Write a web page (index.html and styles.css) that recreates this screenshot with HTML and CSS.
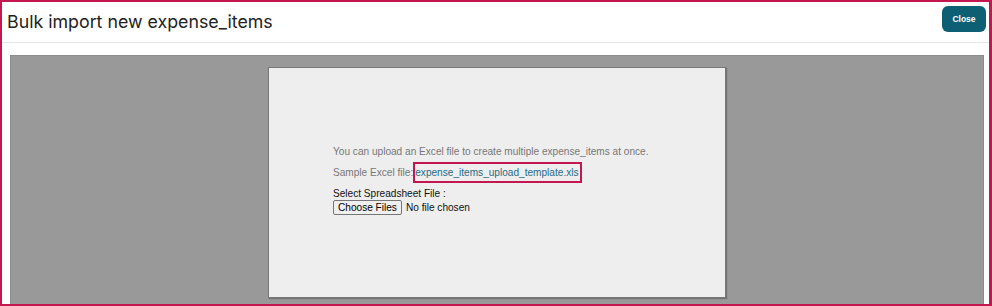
FILE: index.html
```
<!DOCTYPE html>
<html lang="en">
<head>
    <meta charset="UTF-8">
    <title>Bulk import new expense_items</title>
    <link rel="stylesheet" href="styles.css">
</head>
<body>
    <div class="modal">
        <div class="modal-header">
            <h1 class="modal-title">Bulk import new expense_items</h1>
            <button class="close-btn">Close</button>
        </div>
        <div class="modal-body">
            <div class="backdrop">
                <div class="upload-panel">
                    <p class="hint">You can upload an Excel file to create multiple expense_items at once.</p>
                    <p class="hint sample">Sample Excel file:<a href="#" class="sample-link">expense_items_upload_template.xls</a></p>
                    <label class="file-label" for="spreadsheet">Select Spreadsheet File :</label>
                    <input type="file" id="spreadsheet" name="spreadsheet" multiple>
                </div>
            </div>
        </div>
    </div>
</body>
</html>
```

FILE: styles.css
```
html, body {
    margin: 0;
    padding: 0;
    background: #fff;
}
.modal {
    width: 992px;
    height: 306px;
    box-sizing: border-box;
    border: 2px solid #c4174f;
    border-right-width: 3px;
    display: flex;
    flex-direction: column;
    overflow: hidden;
}
.modal-header {
    height: 40px;
    display: flex;
    align-items: center;
    justify-content: space-between;
    border-bottom: 1px solid #e6e6e6;
    padding: 0 3px 0 5px;
    flex-shrink: 0;
}
.modal-title {
    margin: 0;
    font-family: Inter, "Open Sans", sans-serif;
    font-weight: 400;
    font-size: 17.8px;
    color: #222;
    margin-top: -2px;
}
.close-btn {
    width: 44px;
    height: 26px;
    margin-top: -7px;
    border: none;
    border-radius: 6px;
    background-color: #0d5f74;
    color: #fff;
    font-family: "Liberation Sans", Arial, sans-serif;
    font-weight: bold;
    font-size: 8.5px;
    padding: 0;
    cursor: pointer;
}
.modal-body {
    flex-grow: 1;
    padding: 12px 5px 0 8px;
    display: flex;
}
.backdrop {
    flex-grow: 1;
    background-color: #999;
    border: 1px solid #8c8c8c;
    border-bottom: none;
    display: flex;
    justify-content: center;
    padding-top: 11px;
}
.upload-panel {
    width: 458px;
    height: 231px;
    box-sizing: border-box;
    background-color: #eee;
    border: 1px solid #777;
    box-shadow: 1px 1px 1px rgba(0, 0, 0, 0.25);
    padding: 78px 0 0 64px;
    font-family: "Liberation Sans", Arial, sans-serif;
    font-size: 10.1px;
}
.hint {
    margin: 0 0 9px 0;
    color: #777;
    line-height: 12px;
}
.sample {
    margin-bottom: 9px;
}
.sample-link {
    color: #1f6b86;
    text-decoration: none;
    border: 2px solid #c4174f;
    padding: 3px 1px 3px 0;
}
.file-label {
    display: block;
    color: #111;
    line-height: 12px;
}
input[type="file"] {
    font-family: "Liberation Sans", Arial, sans-serif;
    font-size: 10.1px;
    color: #111;
    margin: 0;
}
input[type="file"]::file-selector-button {
    font-family: "Liberation Sans", Arial, sans-serif;
    font-size: 10.1px;
    padding: 1px 4px;
    margin-right: 4px;
    border: 1px solid #767676;
    border-radius: 2px;
    background-color: #efefef;
}
```
